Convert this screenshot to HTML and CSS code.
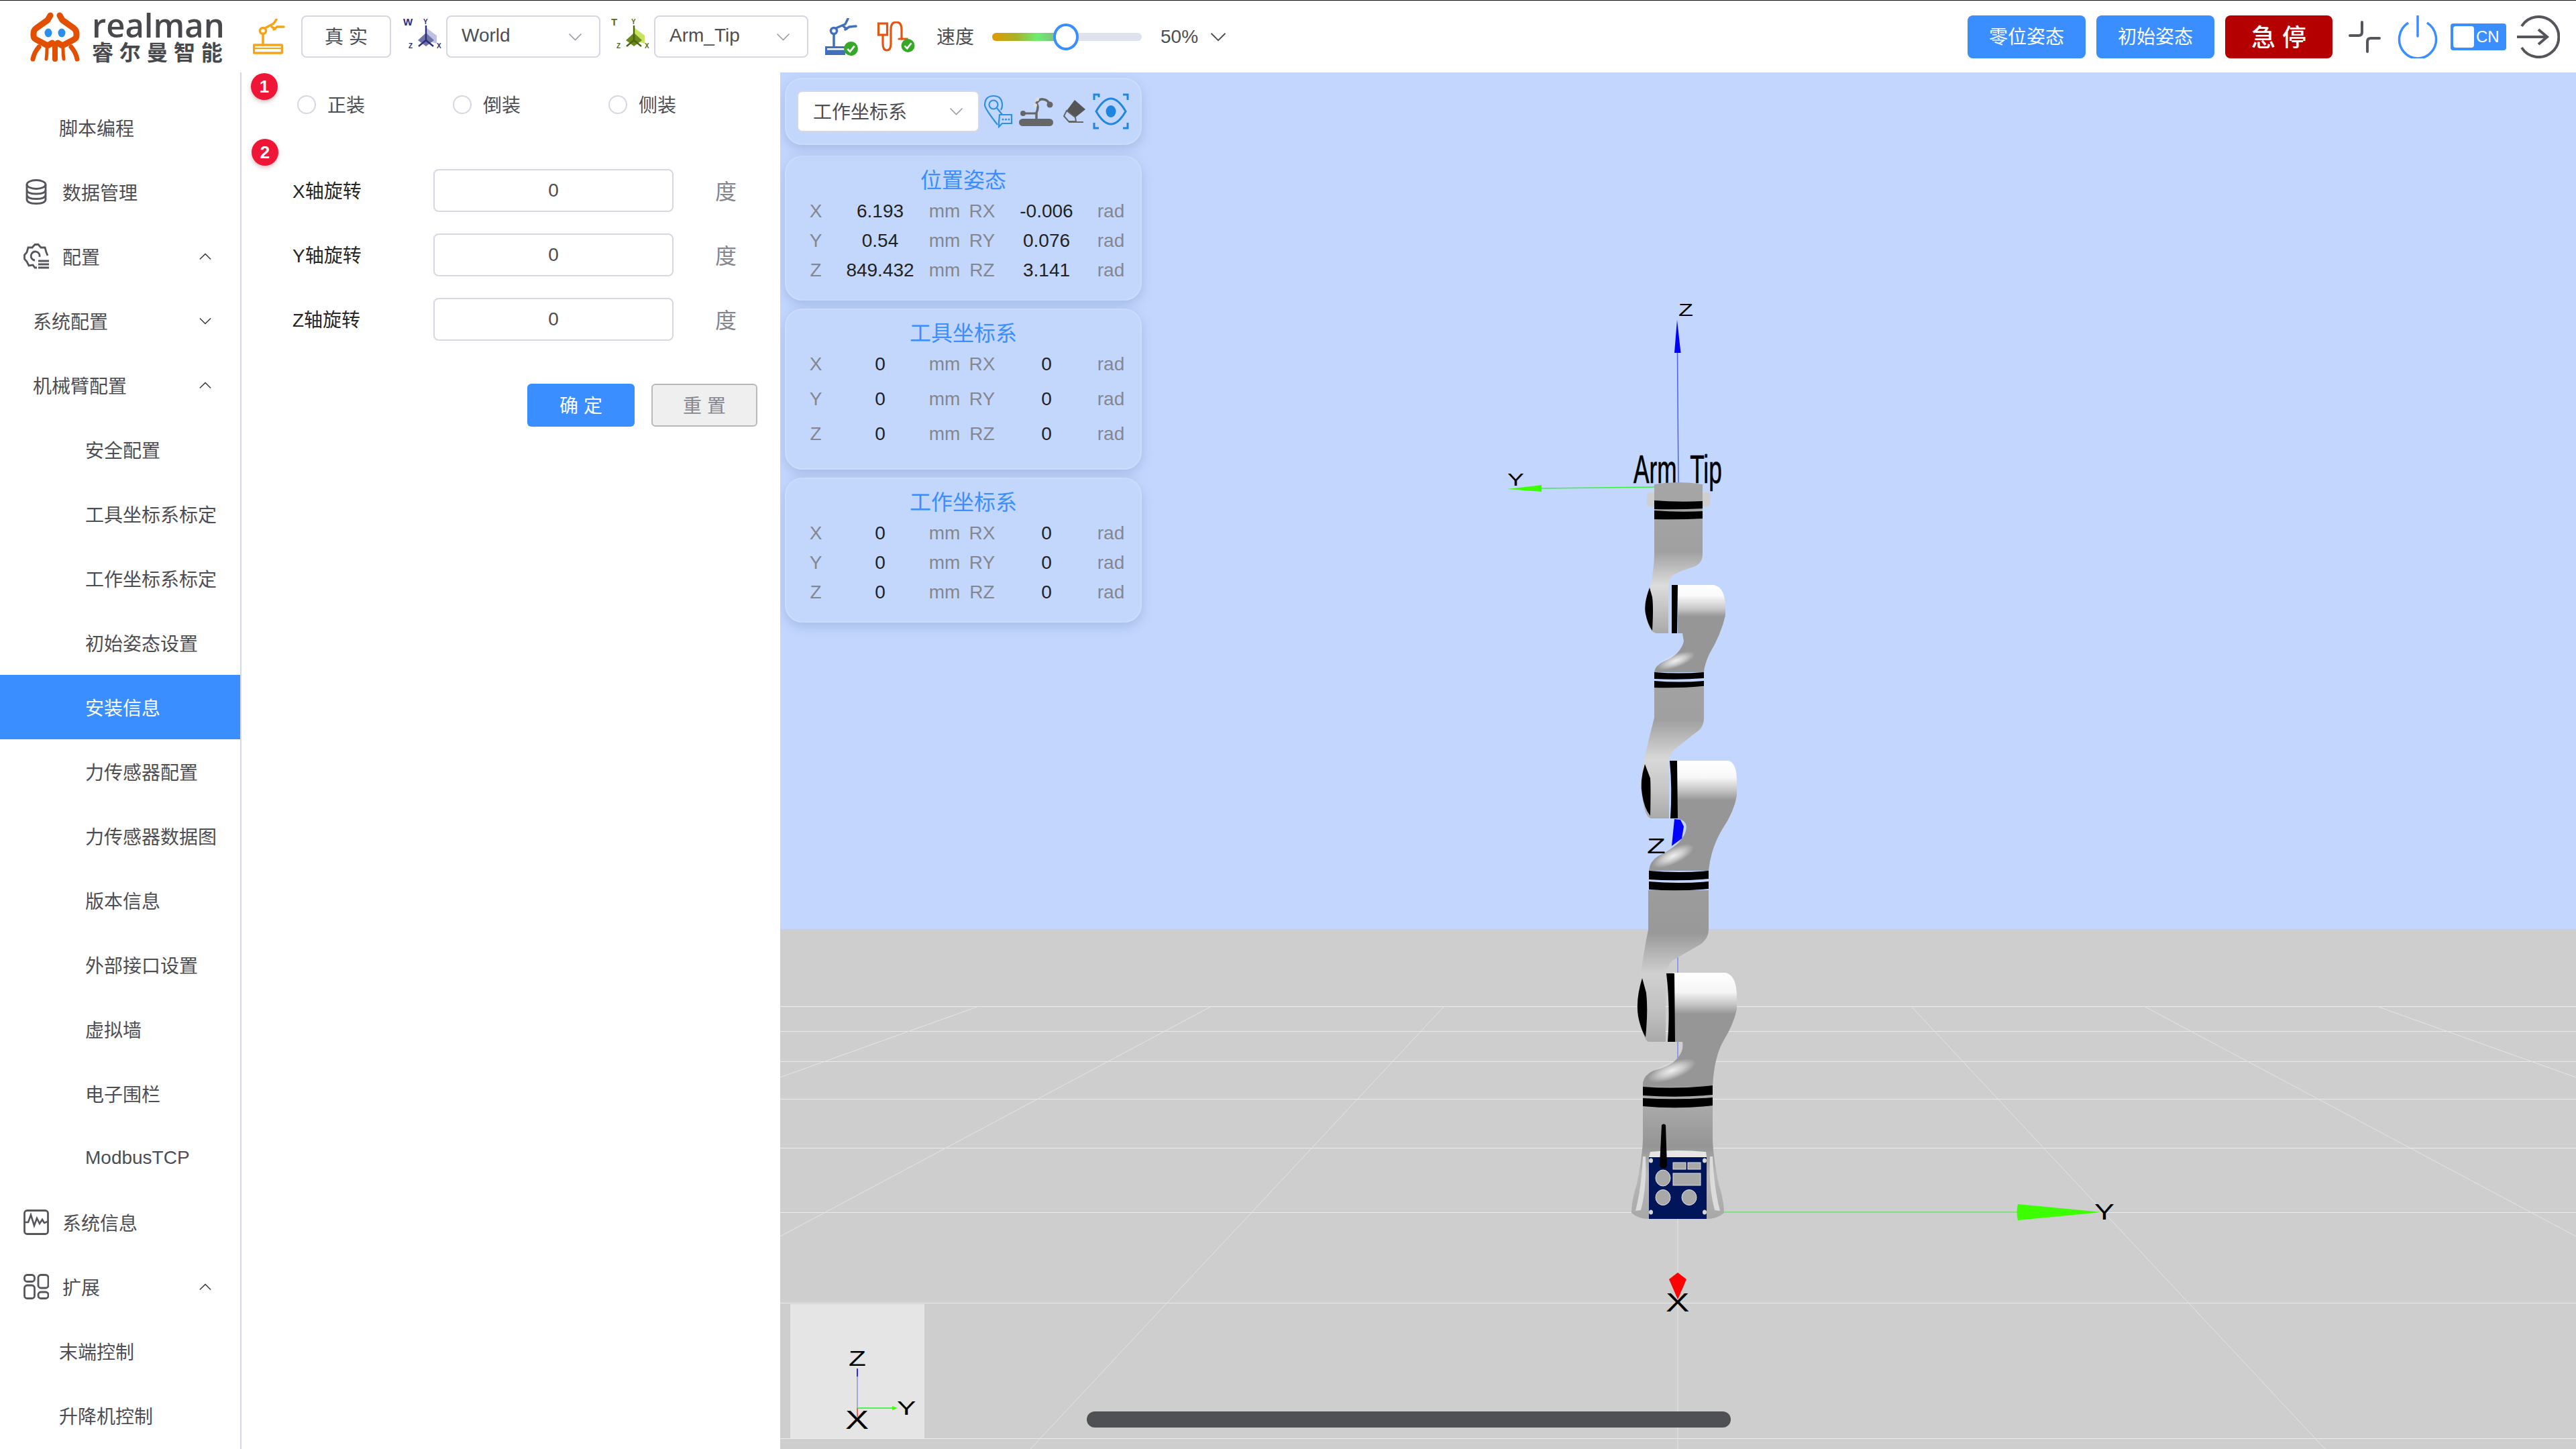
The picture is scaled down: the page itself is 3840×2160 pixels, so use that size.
FILE: index.html
```html
<!DOCTYPE html>
<html lang="zh-CN">
<head>
<meta charset="utf-8">
<title>realman</title>
<link rel="stylesheet" href="styles.css">
</head>
<body>
<svg class="defs" width="0" height="0">
  <symbol id="chev-down" viewBox="0 0 20 12"><path d="M1 1.5 L10 10.5 L19 1.5" fill="none" stroke="currentColor" stroke-width="1.6"/></symbol>
  <symbol id="chev-up" viewBox="0 0 20 12"><path d="M1 10.5 L10 1.5 L19 10.5" fill="none" stroke="currentColor" stroke-width="1.6"/></symbol>
  <symbol id="check" viewBox="0 0 24 24"><circle cx="12" cy="12" r="12" fill="#35a82a"/><path d="M6 12.5 L10.5 17 L18 7.5" fill="none" stroke="#fff" stroke-width="3.2"/></symbol>
</svg>
<div class="app">
  <header class="topbar">
    <div class="logo">
      <svg class="logo-mark" viewBox="0 0 76 74" width="76" height="74">
        <g fill="none" stroke="#e34f00" stroke-width="9" stroke-linejoin="round" stroke-linecap="round">
          <path d="M31 5 L27 12 L10 24 Q6 27 6 32 L6 35 Q6 39 10 41 L27 50 L34 46"/>
          <path d="M45 5 L49 12 L66 24 Q70 27 70 32 L70 35 Q70 39 66 41 L49 50 L42 46"/>
          <path d="M38 52 L38 70" stroke-width="8"/>
          <path d="M14 52 Q7 60 5 70" stroke-width="7"/>
          <path d="M62 52 Q69 60 71 70" stroke-width="7"/>
          <path d="M26 55 Q26 63 25 70" stroke-width="5"/>
          <path d="M50 55 Q50 63 51 70" stroke-width="5"/>
        </g>
        <ellipse cx="28" cy="31" rx="5.5" ry="6.5" fill="#2a8fe8"/>
        <ellipse cx="48" cy="31" rx="5.5" ry="6.5" fill="#2a8fe8"/>
      </svg>
      <div class="logo-text">
        <div class="logo-en">realman</div>
        <div class="logo-cn">睿尔曼智能</div>
      </div>
    </div>

    <svg class="i-arm" viewBox="0 0 48 53" width="48" height="53">
      <g fill="none" stroke="#f5a416" stroke-width="3.5" stroke-linecap="round">
        <rect x="1.5" y="39" width="42" height="12" rx="1"/>
        <path d="M1.5 44 H43.5" stroke-width="2"/>
        <path d="M15 39 V22"/>
        <circle cx="15" cy="18" r="4.5"/>
        <path d="M18 14 L31 7 L35 1"/>
        <path d="M31 16 L36 12 L46 12"/>
        <path d="M28 12 L33 15"/>
      </g>
    </svg>
    <div class="mode-btn">真 实</div>

    <svg class="i-frame" viewBox="0 -6 60 58" width="60" height="58">
      <text x="0" y="11" class="frame-big" fill="#2b2d7a">W</text>
      <text x="30" y="9" class="frame-small" fill="#2b2d7a">Y</text>
      <path d="M34 14 L50 26 L50 38 L34 33 Z" fill="#bcc0e2"/>
      <path d="M34 22 L46 33 L34 42 L22 33 Z" fill="#6f73a8"/>
      <path d="M34 11 V33 L23 42 M34 33 L45 42" fill="none" stroke="#2b2d7a" stroke-width="2.4"/>
      <text x="8" y="45" class="frame-small" fill="#2b2d7a">Z</text>
      <text x="50" y="45" class="frame-small" fill="#2b2d7a">X</text>
    </svg>
    <div class="select sel-frame"><span class="sel-text">World</span><svg class="sel-chev"><use href="#chev-down"/></svg></div>

    <svg class="i-frame i-frame-t" viewBox="0 -6 60 58" width="60" height="58">
      <text x="0" y="11" class="frame-big" fill="#5c6b1a">T</text>
      <text x="30" y="9" class="frame-small" fill="#5c6b1a">Y</text>
      <path d="M34 14 L50 26 L50 38 L34 33 Z" fill="#c6e55c"/>
      <path d="M34 22 L46 33 L34 42 L22 33 Z" fill="#6b8a1b"/>
      <path d="M34 11 V33 L23 42 M34 33 L45 42" fill="none" stroke="#4d6312" stroke-width="2.4"/>
      <text x="8" y="45" class="frame-small" fill="#5c6b1a">Z</text>
      <text x="50" y="45" class="frame-small" fill="#5c6b1a">X</text>
    </svg>
    <div class="select sel-frame"><span class="sel-text">Arm_Tip</span><svg class="sel-chev"><use href="#chev-down"/></svg></div>

    <svg class="i-status i-robot" viewBox="0 0 50 56" width="50" height="56">
      <g fill="none" stroke="#3f6fbd" stroke-width="3.5" stroke-linecap="round">
        <path d="M13 42 V24"/>
        <circle cx="13" cy="19" r="4.5"/>
        <path d="M16 15 L30 9 L34 1"/>
        <path d="M30 17 L36 13 L46 12"/>
        <path d="M27 12 L32 16"/>
      </g>
      <rect x="0" y="42" width="30" height="13" fill="#3f6fbd"/>
      <rect x="3" y="45" width="26" height="2.5" fill="#fff"/>
      <use href="#check" x="27" y="35" width="23" height="21"/>
    </svg>
    <svg class="i-status i-cable" viewBox="0 0 56 46" width="56" height="46">
      <g fill="none" stroke="#e4550f" stroke-width="3.2" stroke-linecap="round">
        <rect x="1.5" y="3" width="13" height="17"/>
        <path d="M8 20 V33 Q8 43 14 43 Q20 43 20 33 V12 Q20 1 28 1 Q36 1 36 12 V26"/>
        <path d="M32 26 H44 V32"/>
      </g>
      <use href="#check" x="35" y="26" width="21" height="20"/>
    </svg>

    <div class="speed-label">速度</div>
    <div class="slider">
      <div class="slider-fill"></div>
      <div class="slider-thumb"></div>
    </div>
    <div class="speed-value">50%<svg class="speed-chev"><use href="#chev-down"/></svg></div>

    <div class="topbar-right">
      <div class="btn-pose">零位姿态</div>
      <div class="btn-pose">初始姿态</div>
      <div class="btn-stop">急 停</div>
      <svg class="i-shrink" viewBox="0 0 48 48" width="48" height="48">
        <path d="M2 22 H15 Q20 22 20 17 V2 M28 46 V31 Q28 26 33 26 H46" fill="none" stroke="#55565b" stroke-width="4" stroke-linecap="round"/>
      </svg>
      <svg class="i-power" viewBox="0 0 60 64" width="60" height="64">
        <path d="M16 11 A27.5 28.5 0 1 0 44 11" fill="none" stroke="#3a8eff" stroke-width="3.5"/>
        <path d="M30 1 V31" stroke="#3a8eff" stroke-width="3.5" stroke-linecap="round"/>
      </svg>
      <div class="lang-toggle"><span class="lang-knob"></span><span class="lang-text">CN</span></div>
      <svg class="i-logout" viewBox="0 0 64 64" width="64" height="64">
        <path d="M7 16 A30 30 0 1 1 7 48" fill="none" stroke="#55565b" stroke-width="4"/>
        <path d="M0 32 H44 M32 21 L45 32 L32 43" fill="none" stroke="#55565b" stroke-width="4"/>
      </svg>
    </div>
  </header>

  <main class="workspace">
    <nav class="sidebar">
      <div class="item lv-plain">脚本编程</div>
      <div class="item lv-icon">
        <svg class="m-icon" viewBox="0 0 38 38" width="38" height="38"><g fill="none" stroke="#55565b" stroke-width="2.8"><ellipse cx="19" cy="8" rx="14" ry="6.5"/><path d="M5 8 V30 Q5 36.5 19 36.5 Q33 36.5 33 30 V8 M5 15.5 Q5 22 19 22 Q33 22 33 15.5 M5 23 Q5 29.5 19 29.5 Q33 29.5 33 23"/></g></svg>
        数据管理
      </div>
      <div class="item lv-icon">
        <svg class="m-icon" viewBox="0 0 38 38" width="38" height="38"><g fill="none" stroke="#55565b" stroke-width="2.8"><path d="M20 36 H17 L14 32 L8 33 L5 27 L1.5 23 L1.5 17 L5 13 L7 6 L13 6 L17 1.5 H22 L26 6 L32 6 L34 13 L36 18"/><path d="M24 20 A6.5 6.5 0 1 0 17 25"/><path d="M22 26 H38 M22 31 H38 M22 36 H38"/></g></svg>
        配置<svg class="m-chev"><use href="#chev-up"/></svg>
      </div>
      <div class="item lv-sub">系统配置<svg class="m-chev"><use href="#chev-down"/></svg></div>
      <div class="item lv-sub">机械臂配置<svg class="m-chev"><use href="#chev-up"/></svg></div>
      <div class="item lv-leaf">安全配置</div>
      <div class="item lv-leaf">工具坐标系标定</div>
      <div class="item lv-leaf">工作坐标系标定</div>
      <div class="item lv-leaf">初始姿态设置</div>
      <div class="item lv-leaf active">安装信息</div>
      <div class="item lv-leaf">力传感器配置</div>
      <div class="item lv-leaf">力传感器数据图</div>
      <div class="item lv-leaf">版本信息</div>
      <div class="item lv-leaf">外部接口设置</div>
      <div class="item lv-leaf">虚拟墙</div>
      <div class="item lv-leaf">电子围栏</div>
      <div class="item lv-leaf">ModbusTCP</div>
      <div class="item lv-icon">
        <svg class="m-icon" viewBox="0 0 38 38" width="38" height="38"><rect x="1.5" y="1.5" width="35" height="35" rx="4" fill="none" stroke="#55565b" stroke-width="2.8"/><path d="M2 19 L7 19 L11 8 L16 24 L20 13 L24 21 L28 15 L31 20 L36 18" fill="none" stroke="#55565b" stroke-width="2.6"/></svg>
        系统信息
      </div>
      <div class="item lv-icon">
        <svg class="m-icon" viewBox="0 0 38 38" width="38" height="38"><g fill="none" stroke="#55565b" stroke-width="2.8"><rect x="1.5" y="1.5" width="15" height="10" rx="4"/><rect x="1.5" y="17" width="15" height="19.5" rx="4"/><rect x="22" y="1.5" width="15" height="19.5" rx="4"/><rect x="22" y="27" width="15" height="9.5" rx="4"/></g></svg>
        扩展<svg class="m-chev"><use href="#chev-up"/></svg>
      </div>
      <div class="item lv-plain">末端控制</div>
      <div class="item lv-plain">升降机控制</div>
    </nav>

    <section class="form-pane">
      <span class="step step-one">1</span>
      <span class="step step-two">2</span>
      <div class="radios">
        <label class="radio"><span class="radio-dot"></span><span class="radio-text">正装</span></label>
        <label class="radio"><span class="radio-dot"></span><span class="radio-text">倒装</span></label>
        <label class="radio"><span class="radio-dot"></span><span class="radio-text">侧装</span></label>
      </div>
      <div class="field"><span class="field-label">X轴旋转</span><input class="field-input" value="0"><span class="field-unit">度</span></div>
      <div class="field"><span class="field-label">Y轴旋转</span><input class="field-input" value="0"><span class="field-unit">度</span></div>
      <div class="field"><span class="field-label">Z轴旋转</span><input class="field-input" value="0"><span class="field-unit">度</span></div>
      <div class="form-actions">
        <div class="btn-ok">确 定</div>
        <div class="btn-reset">重 置</div>
      </div>
    </section>

    <section class="viewport">
      <svg class="scene" viewBox="1163 108 2677 2052" width="2677" height="2052">
        <defs>
          <linearGradient id="hA" gradientUnits="userSpaceOnUse" x1="0" y1="872" x2="0" y2="1002"><stop offset="0" stop-color="#fff"/><stop offset=".12" stop-color="#fafafa"/><stop offset=".27" stop-color="#c9c9c9"/><stop offset=".36" stop-color="#969696"/><stop offset="1" stop-color="#969696"/></linearGradient>
          <linearGradient id="hB" gradientUnits="userSpaceOnUse" x1="0" y1="1134" x2="0" y2="1298"><stop offset="0" stop-color="#fff"/><stop offset=".15" stop-color="#f8f8f8"/><stop offset=".26" stop-color="#c9c9c9"/><stop offset=".36" stop-color="#969696"/><stop offset="1" stop-color="#969696"/></linearGradient>
          <linearGradient id="hC" gradientUnits="userSpaceOnUse" x1="0" y1="1450" x2="0" y2="1620"><stop offset="0" stop-color="#fff"/><stop offset=".17" stop-color="#f5f5f5"/><stop offset=".28" stop-color="#c4c4c4"/><stop offset=".36" stop-color="#969696"/><stop offset="1" stop-color="#969696"/></linearGradient>
          <linearGradient id="nA" gradientUnits="userSpaceOnUse" x1="0" y1="722" x2="0" y2="944"><stop offset="0" stop-color="#a6a6a6"/><stop offset=".45" stop-color="#a0a0a0"/><stop offset=".68" stop-color="#dddddd"/><stop offset=".82" stop-color="#c6c6c6"/><stop offset="1" stop-color="#a9a9a9"/></linearGradient>
          <linearGradient id="nB" gradientUnits="userSpaceOnUse" x1="0" y1="1024" x2="0" y2="1220"><stop offset="0" stop-color="#a2a2a2"/><stop offset=".25" stop-color="#a0a0a0"/><stop offset=".55" stop-color="#d8d8d8"/><stop offset=".78" stop-color="#c6c6c6"/><stop offset="1" stop-color="#a9a9a9"/></linearGradient>
          <linearGradient id="nC" gradientUnits="userSpaceOnUse" x1="0" y1="1327" x2="0" y2="1553"><stop offset="0" stop-color="#9c9c9c"/><stop offset=".28" stop-color="#999"/><stop offset=".55" stop-color="#d0d0d0"/><stop offset=".78" stop-color="#c2c2c2"/><stop offset="1" stop-color="#a9a9a9"/></linearGradient>
          <linearGradient id="base" gradientUnits="userSpaceOnUse" x1="0" y1="1650" x2="0" y2="1817"><stop offset="0" stop-color="#a9a9a9"/><stop offset=".35" stop-color="#959595"/><stop offset=".6" stop-color="#b8b8b8"/><stop offset="1" stop-color="#a8a8a8"/></linearGradient>
          <radialGradient id="glow"><stop offset="0" stop-color="#fff" stop-opacity=".85"/><stop offset=".5" stop-color="#fff" stop-opacity=".5"/><stop offset="1" stop-color="#fff" stop-opacity="0"/></radialGradient>
        </defs>

        <rect x="1163" y="108" width="2677" height="1277" fill="#c3d7fe"/>
        <rect x="1163" y="1385" width="2677" height="775" fill="#cecece"/>

        <g stroke="#ececec" stroke-width="1">
          <path d="M1163 1500.500 H3840 M1163 1537.500 H3840 M1163 1582.500 H3840 M1163 1638.500 H3840 M1163 1711.500 H3840 M1163 1807.500 H3840 M1163 1942.500 H3840 M1163 2144.500 H3840"/>
        </g>
        <g stroke="#e4e4e4" stroke-width="1" fill="none">
          <path d="M2849 1500 L3466 2160 M3196 1500 L3840 1843 M3543 1500 L3840 1606"/>
          <path d="M2153 1500 L1536 2160 M1806 1500 L1163 1843 M1459 1500 L1163 1606"/>
          <path d="M2501 1817 V2160"/>
        </g>

        <!-- base frame axes -->
        <path d="M2570 1807 H3008" stroke="#66e066" stroke-width="1.500"/>
        <path d="M3008 1795 L3133 1807 L3008 1819 Q3005 1807 3008 1795 Z" fill="#3cff00"/>
        <text transform="translate(3122 1818) scale(1.36 1)" class="axis" font-size="33">Y</text>
        <path d="M2501 1897 L2514 1907 L2501 1937 L2488 1907 Z" fill="#ff0000"/>
        <text transform="translate(2483 1955) scale(1.4 1)" class="axis" font-size="38">X</text>

        <!-- tip frame axes -->
        <path d="M2500.5 526 L2502 722" stroke="#4f5cff" stroke-width="1.500"/>
        <path d="M2500 477 L2505.5 526 L2496 526 Z" fill="#0000ff"/>
        <text transform="translate(2502 471) scale(1.44 1)" class="axis" font-size="25">Z</text>
        <path d="M2298 728 L2467 726" stroke="#3cf03c" stroke-width="1.500"/>
        <path d="M2247 729 L2298 723 L2298 733 Z" fill="#3cff00"/>
        <text transform="translate(2247 724) scale(1.41 1)" class="axis" font-size="26.5">Y</text>
        <text transform="translate(2435 720) scale(.587 1)" class="axis axis-heavy" font-size="60">Arm_Tip</text>

        <!-- thin base-frame Z axis seen through the gaps -->
        <path d="M2501 1420 V1582" stroke="#8f9ae8" stroke-width="2"/>

        <!-- robot: base column -->
        <path d="M2449 1612 H2553 V1700 Q2554 1725 2562 1765 Q2570 1790 2570 1808 Q2560 1817 2544 1817 H2458 Q2442 1817 2432 1808 Q2432 1790 2440 1765 Q2448 1725 2449 1700 Z" fill="url(#base)"/>
        <path d="M2458 1725 L2460 1717 Q2500 1713 2543 1717 L2544 1725 Z" fill="#e6e6e6"/>
        <path d="M2449 1724 Q2447 1770 2438 1805 L2446 1804 Q2455 1770 2453 1724 Z" fill="#dcdcdc"/>
        <path d="M2553 1724 Q2555 1770 2564 1805 L2556 1804 Q2547 1770 2549 1724 Z" fill="#dcdcdc"/>
        <rect x="2458" y="1725" width="86" height="92" fill="#00155a"/>
        <g fill="#a8a8a8" stroke="#dedede" stroke-width="1">
          <rect x="2494" y="1733" width="19" height="10"/>
          <rect x="2516" y="1733" width="19" height="10"/>
          <rect x="2494" y="1749" width="41" height="18"/>
          <ellipse cx="2479" cy="1756" rx="11" ry="12"/>
          <ellipse cx="2479" cy="1785" rx="11" ry="11.5"/>
          <ellipse cx="2518" cy="1785" rx="11" ry="11.5"/>
        </g>
        <g fill="#d8d8d8">
          <ellipse cx="2461" cy="1730" rx="3" ry="3.5"/><ellipse cx="2541" cy="1730" rx="3" ry="3.5"/>
          <ellipse cx="2461" cy="1807" rx="3" ry="3.5"/><ellipse cx="2541" cy="1807" rx="3" ry="3.5"/>
        </g>
        <path d="M2477 1677 Q2480 1674 2483 1677 L2485 1738 Q2480 1746 2474 1738 Z" fill="#000"/>

        <!-- robot: lower elbow -->
        <path d="M2457 1327 H2547 V1386 Q2547 1398 2536 1407 L2493 1432 Q2484 1442 2483 1452 V1553 H2458 Q2452 1553 2447 1530 Q2442 1500 2445 1457 Q2450 1420 2457 1386 Z" fill="url(#nC)"/>
        <path d="M2494 1450 H2573 Q2589 1455 2589 1486 V1504 Q2585 1525 2570 1550 Q2555 1575 2553 1620 H2449 L2449 1614 Q2451 1602 2465 1596 Q2495 1588 2503 1574 Q2510 1565 2508 1553 H2494 Z" fill="url(#hC)"/>
        <ellipse cx="2492" cy="1596" rx="38" ry="13" fill="url(#glow)" transform="rotate(-20 2492 1596)"/>
        <path d="M2448 1458 Q2438 1490 2442 1515 Q2446 1535 2453 1546 Q2457 1505 2454 1480 Z" fill="#000"/>
        <path d="M2484 1451 H2496 L2497 1553 H2486 Q2490 1500 2484 1451 Z" fill="#000"/>
        <path d="M2449 1620 Q2501 1624 2553 1618 V1632 Q2501 1637 2449 1633 Z" fill="#000"/>
        <path d="M2449 1637 Q2501 1640 2553 1636 V1648 Q2501 1654 2449 1649 Z" fill="#000"/>

        <!-- robot: middle elbow -->
        <path d="M2466 1024 H2540 V1070 Q2540 1085 2528 1092 L2495 1118 Q2488 1126 2488 1134 V1220 H2462 Q2454 1220 2450 1200 Q2444 1175 2448 1145 Q2458 1100 2466 1070 Z" fill="url(#nB)"/>
        <path d="M2500 1134 H2577 Q2589 1138 2589 1164 V1186 Q2585 1210 2568 1235 Q2550 1265 2547 1298 H2458 Q2459 1284 2472 1276 Q2500 1262 2507 1250 Q2516 1238 2513 1228 Q2510 1222 2500 1220 Z" fill="url(#hB)"/>
        <path d="M2496 1221 L2505 1222 L2510 1232 L2507 1250 L2492 1261 Z" fill="#0000ff"/>
        <ellipse cx="2494" cy="1276" rx="34" ry="12" fill="url(#glow)" transform="rotate(-25 2494 1276)"/>
        <path d="M2452 1139 Q2444 1165 2448 1185 Q2451 1205 2460 1216 Q2461 1175 2460 1160 Z" fill="#000"/>
        <path d="M2489 1134 H2500 L2501 1220 H2490 Q2493 1175 2489 1134 Z" fill="#000"/>
        <path d="M2458 1298 Q2502 1302 2547 1298 V1310 Q2502 1314 2458 1311 Z" fill="#000"/>
        <path d="M2458 1314 Q2502 1318 2547 1314 V1325 Q2502 1329 2458 1326 Z" fill="#000"/>
        <text transform="translate(2455 1272) scale(1.47 1)" class="axis" font-size="31">Z</text>

        <!-- robot: upper elbow -->
        <path d="M2466 722 Q2502 716 2538 722 V826 Q2538 840 2525 845 Q2502 852 2493 858 Q2487 866 2487 876 V944 H2470 Q2458 944 2453 915 Q2450 890 2460 875 Q2466 845 2466 826 Z" fill="url(#nA)"/>
        <path d="M2456 735 Q2460 733 2466 734 V756 L2458 755 Q2455 754 2455 750 V738 Z M2548 735 Q2544 733 2538 734 V756 L2546 755 Q2549 754 2549 750 V738 Z" fill="#cfcfcf"/>
        <path d="M2466 746 Q2502 749 2538 747 V758 Q2502 760 2466 759 Z" fill="#000"/>
        <path d="M2466 761 Q2502 764 2538 762 V773 Q2502 775 2466 774 Z" fill="#000"/>
        <path d="M2501 872 H2555 Q2572 876 2572 906 V917 Q2566 945 2548 975 Q2541 990 2540 1002 H2466 Q2467 992 2480 986 Q2505 976 2510 956 L2508 944 H2501 Z" fill="url(#hA)"/>
        <ellipse cx="2498" cy="985" rx="30" ry="10" fill="url(#glow)" transform="rotate(-20 2498 985)"/>
        <path d="M2459 876 Q2450 900 2453 915 Q2456 930 2463 940 Q2465 905 2463 890 Z" fill="#000"/>
        <path d="M2492 872 H2501 L2500 944 H2492 Z" fill="#000"/>
        <path d="M2466 1002 Q2503 1005 2540 1002 V1011 Q2503 1014 2466 1012 Z" fill="#000"/>
        <path d="M2466 1015 Q2503 1018 2540 1015 V1023 Q2503 1026 2466 1025 Z" fill="#000"/>

        <!-- orientation gizmo -->
        <rect x="1178" y="1944" width="200" height="200" fill="#e5e5e5"/>
        <path d="M1278 2041 V2099" stroke="#8f8fe8" stroke-width="1.5"/>
        <path d="M1278 2040 V2052" stroke="#0000ff" stroke-width="1.5"/>
        <path d="M1278 2099 H1330" stroke="#55ee55" stroke-width="2"/>
        <path d="M1330 2096 L1338 2099 L1330 2102 Z" fill="#3cff00"/>
        <path d="M1278 2099 V2112" stroke="#ff3030" stroke-width="1.5"/>
        <text transform="translate(1265 2036) scale(1.37 1)" class="axis" font-size="31">Z</text>
        <text transform="translate(1337 2109) scale(1.47 1)" class="axis" font-size="29">Y</text>
        <text transform="translate(1260 2130) scale(1.35 1)" class="axis" font-size="39">X</text>
      </svg>

      <div class="hscroll"></div>

      <div class="panels">
        <div class="panel panel-tools">
          <div class="select sel-coord"><span class="sel-text">工作坐标系</span><svg class="sel-chev"><use href="#chev-down"/></svg></div>
          <svg class="t-pin" viewBox="0 0 44 50" width="44" height="50">
            <g fill="none" stroke="#2f8fe0" stroke-width="2.2">
              <path d="M21 45 Q3 22 2 16 Q2 2 15 2 Q28 2 28 16 Q28 20 26 23"/>
              <circle cx="15" cy="15" r="6.5"/>
              <path d="M20 20 L29 31"/>
              <path d="M24 30 H42 V43 H28 L23 48 V42 Z" fill="#c3d7fe"/>
            </g>
            <g fill="#2f8fe0"><circle cx="29" cy="37" r="1.5"/><circle cx="33.500" cy="37" r="1.5"/><circle cx="38" cy="37" r="1.5"/></g>
          </svg>
          <svg class="t-robot" viewBox="0 0 51 44" width="51" height="44">
            <rect x="0" y="33" width="51" height="11" rx="5.500" fill="#666"/>
            <path d="M26 33 V24 Q30 16 26 10 Q30 3 36 4 Q44 5 45 12" fill="none" stroke="#666" stroke-width="3.500"/>
            <path d="M6 25 H26" stroke="#666" stroke-width="3"/>
            <circle cx="6" cy="25" r="4" fill="#666"/><circle cx="46" cy="12" r="4.500" fill="#666"/>
            <circle cx="27" cy="4" r="3" fill="#ddd"/><circle cx="24" cy="13" r="3" fill="#ddd"/>
          </svg>
          <svg class="t-eraser" viewBox="0 0 33 34" width="33" height="34">
            <path d="M17 0 L33 14 L18 26 L5 16 Z" fill="#555"/>
            <path d="M5 16 L18 26 L19 32 L8 32 L1 24 Z" fill="none" stroke="#666" stroke-width="2"/>
            <path d="M8 33 H30" stroke="#666" stroke-width="2"/>
          </svg>
          <svg class="t-eye" viewBox="0 0 54 54" width="54" height="54">
            <g fill="none" stroke="#1f86e0" stroke-width="3">
              <path d="M9 6 V2 H2 V10 M45 2 H52 V10 M2 44 V52 H9 M52 44 V52 H45"/>
              <path d="M5 27 Q16 8 27 8 Q38 8 49 27 Q38 46 27 46 Q16 46 5 27 Z"/>
            </g>
            <ellipse cx="27" cy="27" rx="7.500" ry="9" fill="#1f86e0"/>
          </svg>
        </div>

        <div class="panel panel-data">
          <div class="panel-title">位置姿态</div>
          <div class="rows">
            <span class="k">X</span><span class="v">6.193</span><span class="k">mm</span><span class="k">RX</span><span class="v">-0.006</span><span class="k">rad</span>
            <span class="k">Y</span><span class="v">0.54</span><span class="k">mm</span><span class="k">RY</span><span class="v">0.076</span><span class="k">rad</span>
            <span class="k">Z</span><span class="v">849.432</span><span class="k">mm</span><span class="k">RZ</span><span class="v">3.141</span><span class="k">rad</span>
          </div>
        </div>

        <div class="panel panel-data panel-tall">
          <div class="panel-title">工具坐标系</div>
          <div class="rows rows-tall">
            <span class="k">X</span><span class="v">0</span><span class="k">mm</span><span class="k">RX</span><span class="v">0</span><span class="k">rad</span>
            <span class="k">Y</span><span class="v">0</span><span class="k">mm</span><span class="k">RY</span><span class="v">0</span><span class="k">rad</span>
            <span class="k">Z</span><span class="v">0</span><span class="k">mm</span><span class="k">RZ</span><span class="v">0</span><span class="k">rad</span>
          </div>
        </div>

        <div class="panel panel-data">
          <div class="panel-title">工作坐标系</div>
          <div class="rows">
            <span class="k">X</span><span class="v">0</span><span class="k">mm</span><span class="k">RX</span><span class="v">0</span><span class="k">rad</span>
            <span class="k">Y</span><span class="v">0</span><span class="k">mm</span><span class="k">RY</span><span class="v">0</span><span class="k">rad</span>
            <span class="k">Z</span><span class="v">0</span><span class="k">mm</span><span class="k">RZ</span><span class="v">0</span><span class="k">rad</span>
          </div>
        </div>
      </div>
    </section>
  </main>
</div>
</body>
</html>
```
FILE: styles.css
```css
* { box-sizing: border-box; }
html, body { margin: 0; padding: 0; }
body {
  width: 3840px;
  height: 2160px;
  overflow: hidden;
  background: #fff;
  font-family: "Liberation Sans", "Noto Sans CJK SC", sans-serif;
  font-size: 28px;
  color: #4d4e53;
}
.defs { position: absolute; }
.app { display: flex; flex-direction: column; height: 2160px; }

/* top bar */
.topbar {
  flex: 0 0 108px;
  height: 108px;
  display: flex;
  align-items: center;
  border-top: 1px solid #111;
  padding-left: 44px;
  padding-right: 24px;
}
.topbar svg { flex: none; display: block; }
.logo { display: flex; align-items: center; gap: 17px; width: 288px; }
.logo-text { width: 195px; white-space: nowrap; }
.logo-en {
  font-family: "Open Sans", sans-serif;
  font-size: 49px;
  font-weight: 600;
  line-height: 42px;
  color: #48494d;
}
.logo-cn {
  font-family: "Noto Sans CJK SC", sans-serif;
  font-size: 32px;
  font-weight: 700;
  line-height: 36px;
  letter-spacing: 8.7px;
  color: #48494d;
}
.i-arm { margin-left: 45px; }
.mode-btn {
  width: 134px;
  height: 63px;
  margin-left: 24px;
  padding-bottom: 3px;
  display: flex;
  align-items: center;
  justify-content: center;
  border: 2px solid #d5d7e5;
  border-radius: 8px;
}
.topbar .i-frame { margin-left: 18px; margin-bottom: 10px; }
.topbar .i-frame-t { margin-left: 16px; }
.frame-big { font: 700 15px "Liberation Sans", sans-serif; }
.frame-small { font: 700 10px "Liberation Sans", sans-serif; }
.select {
  display: flex;
  align-items: center;
  justify-content: space-between;
  background: #fff;
  border: 2px solid #d5d7e5;
  border-radius: 8px;
}
.sel-text { padding-bottom: 3px; }
.sel-frame { width: 230px; height: 63px; margin-left: 4px; padding: 0 25px 0 21px; }
.sel-chev { width: 21px; height: 12px; color: #9a9ca5; }
.i-robot { margin-left: 25px; }
.i-cable { margin-left: 28px; }
.speed-label { margin-left: 32px; padding-bottom: 3px; }
.slider {
  position: relative;
  width: 223px;
  height: 12px;
  margin-left: 27px;
  border-radius: 6px;
  background: #dfe2ec;
}
.slider-fill {
  height: 12px;
  width: 96px;
  border-radius: 6px 0 0 6px;
  background: linear-gradient(90deg, #e09a00 0%, #a8b327 38%, #6cee70 70%, #7fbe80 100%);
}
.slider-thumb {
  position: absolute;
  left: 91px;
  top: -14px;
  width: 38px;
  height: 40px;
  border: 4px solid #3a8eff;
  border-radius: 50%;
  background: #fff;
}
.speed-value { display: flex; align-items: center; gap: 18px; margin-left: 28px; }
.speed-chev { width: 24px; height: 14px; color: #4d4e53; }
.topbar-right { margin-left: auto; display: flex; align-items: center; }
.btn-pose, .btn-stop {
  display: flex;
  align-items: center;
  justify-content: center;
  height: 64px;
  padding-bottom: 3px;
  border-radius: 8px;
  color: #fff;
}
.btn-pose { width: 176px; margin-right: 16px; background: #3a8eff; }
.btn-stop { width: 160px; background: #b50000; font-size: 36px; font-weight: 500; }
.i-shrink { margin-left: 24px; }
.i-power { margin-left: 25px; }
.lang-toggle {
  width: 83px;
  height: 40px;
  margin-left: 19px;
  padding: 4px;
  display: flex;
  align-items: center;
  gap: 3px;
  background: #3a8eff;
  border-radius: 4px;
}
.lang-knob { width: 31px; height: 32px; background: #fff; border-radius: 4px; }
.lang-text { font-size: 24px; color: #fff; }
.i-logout { margin-left: 16px; }

/* workspace */
.workspace { flex: 1; display: flex; min-height: 0; }
.sidebar {
  flex: 0 0 360px;
  padding-top: 34px;
  border-right: 2px solid #d5d7e5;
  overflow: hidden;
}
.item {
  position: relative;
  display: flex;
  align-items: center;
  height: 96px;
}
.lv-plain { padding-left: 88px; }
.lv-icon { padding-left: 35px; }
.lv-sub { padding-left: 49px; }
.lv-leaf { padding-left: 127px; }
.m-icon { flex: none; margin-right: 20px; }
.m-chev { width: 18px; height: 11px; margin-left: auto; margin-right: 43px; color: #333; }
.active { background: #3a8eff; color: #fff; }

/* install form */
.form-pane {
  position: relative;
  flex: 0 0 803px;
  padding: 34px 0 0 76px;
  overflow: hidden;
}
.step {
  position: absolute;
  width: 40px;
  height: 40px;
  display: flex;
  align-items: center;
  justify-content: center;
  border-radius: 50%;
  background: #ef1536;
  color: #fff;
  font-size: 26px;
  font-weight: 700;
  box-shadow: 0 3px 6px rgba(120, 0, 20, .25);
}
.step-one { left: 14px; top: 1px; }
.step-two { left: 15px; top: 99px; }
.radios { display: flex; height: 28px; margin-bottom: 82px; padding-left: 7px; }
.radio { display: flex; align-items: center; gap: 17px; width: 232px; }
.radio-dot { width: 28px; height: 28px; border: 2px solid #d5d7e5; border-radius: 50%; background: #fff; }
.radio-text { padding-bottom: 3px; }
.field { display: flex; align-items: center; height: 64px; margin-bottom: 32px; }
.field-label { width: 210px; padding-bottom: 3px; color: #262626; }
.field-input {
  width: 358px;
  height: 64px;
  border: 2px solid #d5d7e5;
  border-radius: 8px;
  background: #fff;
  text-align: center;
  font: 28px "Liberation Sans", sans-serif;
  color: #4d4e53;
  outline: none;
}
.field-unit { margin-left: 62px; padding-bottom: 3px; font-size: 32px; color: #85878f; }
.form-actions { display: flex; justify-content: flex-end; gap: 25px; width: 693px; margin-top: 64px; }
.btn-ok, .btn-reset {
  display: flex;
  align-items: center;
  justify-content: center;
  height: 64px;
  padding-bottom: 3px;
  border-radius: 6px;
}
.btn-ok { width: 160px; background: #3a8eff; color: #fff; }
.btn-reset { width: 158px; background: #efefef; border: 2px solid #b9b9bd; color: #85878f; }

/* 3d viewport */
.viewport { position: relative; flex: 1; overflow: hidden; background: #c3d7fe; }
.scene { position: absolute; left: 0; top: 0; display: block; }
.axis { font-family: "Liberation Sans", sans-serif; fill: #000; }
.axis-heavy { stroke: #000; stroke-width: .7px; }
.hscroll {
  position: absolute;
  left: 457px;
  top: 1996px;
  width: 960px;
  height: 24px;
  border-radius: 12px;
  background: #4f5054;
}
.panels {
  position: absolute;
  left: 7px;
  top: 8px;
  width: 532px;
  display: flex;
  flex-direction: column;
  gap: 12px;
}
.panel {
  border: 2px solid #cbdcfd;
  border-radius: 26px;
  background: #c3d7fd;
  box-shadow: 0 6px 18px rgba(90, 115, 170, .28);
}
.panel-tools {
  height: 100px;
  margin-bottom: 4px;
  position: relative;
  padding-left: 16px;
  display: flex;
  align-items: center;
}
.sel-coord { width: 272px; height: 62px; padding: 0 22px; }
.panel-tools svg.t-pin { margin-left: 6px; }
.t-robot { margin-left: 9px; }
.t-eraser { margin-left: 15px; }
.t-eye { margin-left: 11px; }
.panel-data { height: 216px; padding: 15px 0 0 18px; }
.panel-tall { height: 240px; }
.panel-title { height: 40px; line-height: 40px; margin-left: -18px; text-align: center; font-size: 32px; color: #3a8eff; }
.rows {
  margin-top: 4px;
  display: grid;
  grid-template-columns: 52px 140px 52px 60px 132px 60px;
  grid-auto-rows: 44px;
  line-height: 44px;
  text-align: center;
}
.rows-tall { margin-top: 0; grid-auto-rows: 52px; line-height: 52px; }
.k { color: #85878f; }
.v { color: #222; }
```
